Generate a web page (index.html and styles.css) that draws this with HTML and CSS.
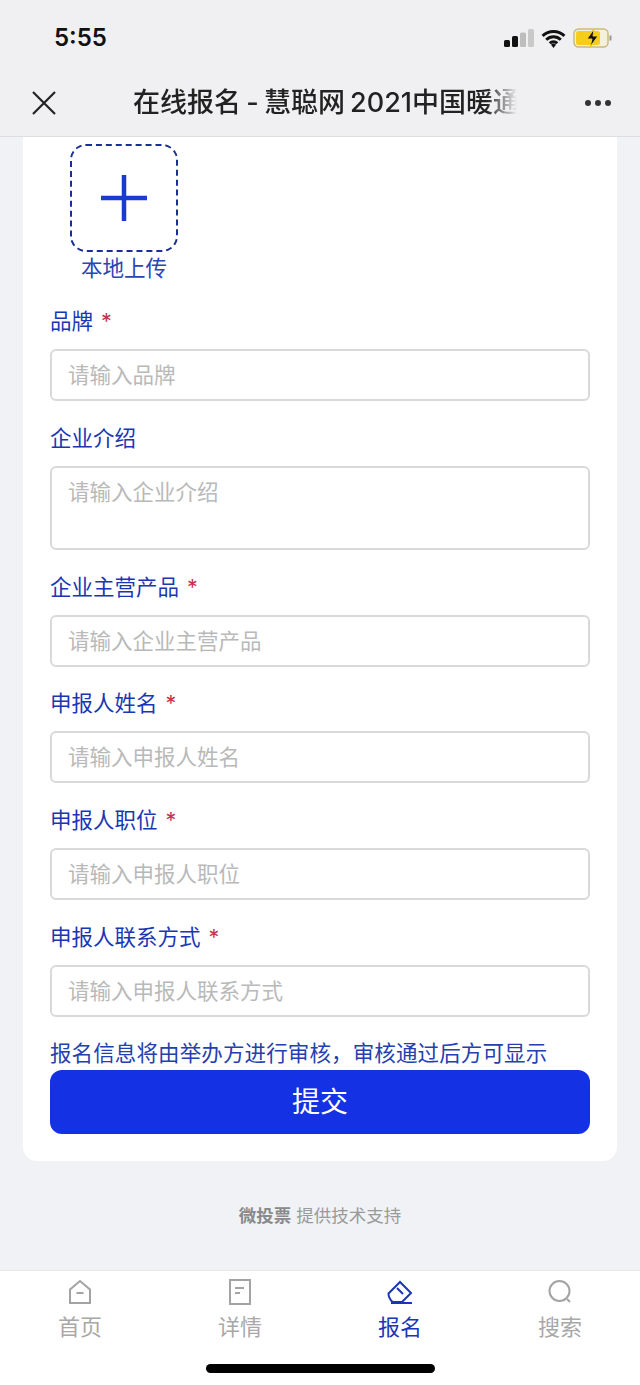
FILE: index.html
```html
<!DOCTYPE html>
<html lang="zh">
<head>
<meta charset="utf-8">
<title>在线报名</title>
<link rel="stylesheet" href="styles.css">
</head>
<body>
<div class="screen">
  <header class="top">
    <div class="status">
      <span class="time">5:55</span>
      <div class="status-icons">
        <svg width="30" height="18" viewBox="0 0 30 18"><rect x="0" y="11" width="6" height="7" rx="1.500" fill="#111"/><rect x="8" y="7" width="6" height="11" rx="1.500" fill="#111"/><rect x="16" y="3.500" width="6" height="14.500" rx="1.500" fill="#bdbdbd"/><rect x="24" y="0" width="6" height="18" rx="1.500" fill="#c9c9c9"/></svg>
        <svg width="25" height="19" viewBox="0 0 24 18"><path d="M1.500 6.500a15 15 0 0 1 21 0M5 10.200a10 10 0 0 1 14 0M8.400 13.600a5 5 0 0 1 7.200 0" fill="none" stroke="#111" stroke-width="2.800"/><path d="M12 18l-2.400-3a3.500 3.500 0 0 1 4.800 0z" fill="#111"/></svg>
        <svg width="40" height="20" viewBox="0 0 40 20"><rect x="1" y="1" width="34" height="18" rx="4.500" fill="#f4f0dc" stroke="#c9bb7a" stroke-width="1.500"/><rect x="3" y="3" width="24" height="14" rx="2.500" fill="#f7cd1c"/><path d="M37.500 7.500v5" stroke="#999" stroke-width="2"/><path d="M21 1l-7 10h5l-2 8 8-11h-5z" fill="#111" stroke="#f7cd1c" stroke-width="1"/></svg>
      </div>
    </div>
    <div class="nav">
      <svg class="close" width="24" height="24" viewBox="0 0 24 24"><path d="M1 1l22 22M23 1L1 23" stroke="#222" stroke-width="2.200" fill="none"/></svg>
      <div class="title">在线报名 - 慧聪网 2021中国暖通</div>
      <div class="more"><i></i><i></i><i></i></div>
    </div>
  </header>

  <main class="content">
    <form class="card">
      <div class="upload">
        <div class="upload-box">
          <svg width="46" height="46" viewBox="0 0 46 46"><path d="M23 0v46M0 23h46" stroke="#1a3bd0" stroke-width="4.500"/></svg>
        </div>
        <div class="upload-text">本地上传</div>
      </div>

      <label class="label first">品牌 <span class="req">*</span></label>
      <div class="input">请输入品牌</div>
      <label class="label">企业介绍</label>
      <div class="input area">请输入企业介绍</div>
      <label class="label">企业主营产品 <span class="req">*</span></label>
      <div class="input">请输入企业主营产品</div>
      <label class="label">申报人姓名 <span class="req">*</span></label>
      <div class="input">请输入申报人姓名</div>
      <label class="label">申报人职位 <span class="req">*</span></label>
      <div class="input">请输入申报人职位</div>
      <label class="label">申报人联系方式 <span class="req">*</span></label>
      <div class="input">请输入申报人联系方式</div>

      <p class="note">报名信息将由举办方进行审核，审核通过后方可显示</p>
      <div class="submit">提交</div>
    </form>
    <div class="support"><b>微投票</b> 提供技术支持</div>
  </main>

  <footer class="tabs">
    <div class="tab-row">
      <div class="tab">
        <svg width="26" height="26" viewBox="0 0 26 26"><path d="M3 10.500L13 2l10 8.500V24H3zM9.500 14h7" fill="none" stroke="#a3a3a3" stroke-width="2"/></svg>
        <span>首页</span>
      </div>
      <div class="tab">
        <svg width="26" height="26" viewBox="0 0 26 26"><path d="M3 1h20v24H3zM8 9h9M8 14h5" fill="none" stroke="#a3a3a3" stroke-width="2"/></svg>
        <span>详情</span>
      </div>
      <div class="tab active">
        <svg width="26" height="26" viewBox="0 0 26 26"><path d="M14 23H5.500Q1.500 19 1.500 14.500L13 3l11 11-9 9zM10 9l6 6M4 24h21" fill="none" stroke="#1b36b4" stroke-width="2"/></svg>
        <span>报名</span>
      </div>
      <div class="tab">
        <svg width="26" height="26" viewBox="0 0 26 26"><circle cx="12.500" cy="12" r="10" fill="none" stroke="#a3a3a3" stroke-width="2"/><path d="M20 20l3 3" stroke="#a3a3a3" stroke-width="2"/></svg>
        <span>搜索</span>
      </div>
    </div>
    <div class="home-bar"></div>
  </footer>
</div>
</body>
</html>
```
FILE: styles.css
```css
* { box-sizing: border-box; }
html, body { margin: 0; padding: 0; }
body { font-family: "Inter", "Noto Sans CJK SC", sans-serif; background: #f0f2f6; }
.screen { width: 640px; height: 1385px; display: flex; flex-direction: column; overflow: hidden; }

.top { height: 137px; flex: none; background: #f0f0f2; border-bottom: 1px solid #dedee0; }
.status { height: 74px; padding: 23px 27px 0 54px; display: flex; justify-content: space-between; align-items: flex-start; }
.time { font-size: 24px; line-height: 30px; font-weight: 600; color: #111; font-family: "Inter", sans-serif; }
.status-icons { display: flex; align-items: center; gap: 7px; padding-top: 5px; }
.nav { height: 62px; display: flex; align-items: center; padding: 0 29px 4px 32px; }
.close { flex: none; }
.title { width: 384px; margin-left: 77px; font-size: 27px; line-height: 40px; font-weight: 500; color: #222; white-space: nowrap; overflow: hidden; word-spacing: -2px;
  -webkit-mask-image: linear-gradient(to right, #000 92%, transparent 100%); mask-image: linear-gradient(to right, #000 92%, transparent 100%); }
.more { margin-left: auto; display: flex; gap: 4px; }
.more i { width: 6px; height: 6px; border-radius: 50%; background: #333; }

.content { flex: 1; min-height: 0; }
.card { margin: 0 23px; height: 1024px; padding: 7px 27px 0 27px; background: #fff; border-radius: 0 0 14px 14px; display: flex; flex-direction: column; }
.upload { width: 108px; margin-left: 20px; display: flex; flex-direction: column; align-items: center; }
.upload-box { width: 108px; height: 108px; border: 2px dashed #1a2f96; border-radius: 16px; display: flex; align-items: center; justify-content: center; }
.upload-text { font-size: 21.500px; line-height: 32px; color: #2a45b4; white-space: nowrap; }
.label { display: block; font-size: 21.500px; line-height: 30px; color: #1b36b4; height: 30px; margin-top: 21.800px; margin-bottom: 13px; }
.label.first { margin-top: 22px; }
.req { color: #c8324a; margin-left: 2px; }
.input { height: 52px; border: 2px solid #d9d9d9; border-radius: 6px; padding: 0 16px; font-size: 21.500px; line-height: 48px; color: #b9b9b9; }
.input.area { height: 84px; }
.note { margin: 20px 0 0; font-size: 21.500px; line-height: 32px; letter-spacing: 0.120px; color: #2340b0; white-space: nowrap; height: 32px; }
.submit { margin-top: 1px; height: 64px; border-radius: 12px; background: #1432e4; color: #fff; font-size: 28px; line-height: 64px; text-align: center; }
.support { margin-top: 41px; text-align: center; font-size: 17.500px; line-height: 28px; color: #9a9a9a; }
.support b { font-weight: 700; color: #8a8a8a; }

.tabs { flex: none; height: 115px; background: #fff; border-top: 1px solid #e6e8ea; }
.tab-row { display: flex; padding-top: 8px; height: 84px; }
.tab { flex: 1; display: flex; flex-direction: column; align-items: center; color: #a8a8a8; font-size: 22px; line-height: 32px; }
.tab span { margin-top: 6px; }
.tab.active { color: #1b36b4; }
.home-bar { width: 229px; height: 9px; border-radius: 5px; background: #000; margin: 9px auto 0; }
```
